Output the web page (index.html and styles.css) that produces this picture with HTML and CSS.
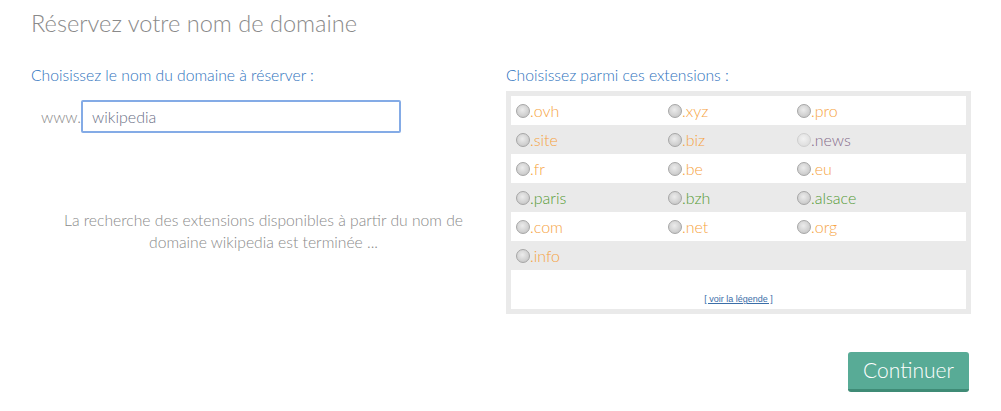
FILE: index.html
```html
<!DOCTYPE html>
<html lang="fr">
<head>
<meta charset="utf-8">
<title>Réservez votre nom de domaine</title>
<link rel="stylesheet" href="styles.css">
</head>
<body>
<div class="page">
  <h1 class="title">Réservez votre nom de domaine</h1>
  <div class="cols">
    <div class="left">
      <p class="label">Choisissez le nom du domaine à réserver :</p>
      <div class="domain-row">
        <span class="www">www.</span>
        <input class="domain-input" type="text" value="wikipedia">
      </div>
      <p class="status">La recherche des extensions disponibles à partir du nom de domaine wikipedia est terminée ...</p>
    </div>
    <div class="right">
      <p class="label">Choisissez parmi ces extensions :</p>
      <div class="panel">
        <div class="grid">
          <div class="row">
            <label class="ext orange"><span class="radio"></span>.ovh</label>
            <label class="ext orange"><span class="radio"></span>.xyz</label>
            <label class="ext orange"><span class="radio"></span>.pro</label>
          </div>
          <div class="row alt">
            <label class="ext orange"><span class="radio"></span>.site</label>
            <label class="ext orange"><span class="radio"></span>.biz</label>
            <label class="ext purple"><span class="radio disabled"></span>.news</label>
          </div>
          <div class="row">
            <label class="ext orange"><span class="radio"></span>.fr</label>
            <label class="ext orange"><span class="radio"></span>.be</label>
            <label class="ext orange"><span class="radio"></span>.eu</label>
          </div>
          <div class="row alt">
            <label class="ext green"><span class="radio"></span>.paris</label>
            <label class="ext green"><span class="radio"></span>.bzh</label>
            <label class="ext green"><span class="radio"></span>.alsace</label>
          </div>
          <div class="row">
            <label class="ext orange"><span class="radio"></span>.com</label>
            <label class="ext orange"><span class="radio"></span>.net</label>
            <label class="ext orange"><span class="radio"></span>.org</label>
          </div>
          <div class="row alt">
            <label class="ext orange"><span class="radio"></span>.info</label>
            <span></span>
            <span></span>
          </div>
        </div>
        <div class="legend"><a href="#">[ voir la légende ]</a></div>
      </div>
    </div>
  </div>
  <div class="actions">
    <button class="btn" type="button">Continuer</button>
  </div>
</div>
</body>
</html>
```

FILE: styles.css
```css
html, body {
  margin: 0;
  padding: 0;
  background: #ffffff;
}

body {
  font-family: Lato, "Open Sans", "Liberation Sans", sans-serif;
  font-weight: 300;
  color: #888888;
}

.page {
  padding: 8px 30px 0 31px;
}

.title {
  margin: 0;
  font-size: 23.6px;
  line-height: 30px;
  font-weight: 300;
  color: #8a8a8a;
}

.cols {
  display: flex;
  margin-top: 27px;
}

.left {
  width: 465px;
  flex: none;
}

.right {
  margin-left: 10px;
  width: 465px;
  flex: none;
}

.label {
  margin: 0;
  font-size: 15.7px;
  line-height: 20px;
  color: #2e72bd;
}

.domain-row {
  display: flex;
  align-items: center;
  margin-top: 15px;
}

.www {
  width: 50px;
  flex: none;
  text-align: right;
  font-size: 16px;
  color: #888888;
}

.domain-input {
  box-sizing: border-box;
  width: 320px;
  height: 33px;
  margin: 0;
  padding: 0 0 0 9px;
  border: 2px solid #84abe6;
  border-radius: 2px;
  font-family: Lato, "Open Sans", "Liberation Sans", sans-serif;
  font-weight: 300;
  font-size: 16px;
  color: #6a6f86;
  outline: none;
}

.status {
  margin: 76px 0 0 0;
  padding: 0 25px;
  font-size: 15.7px;
  line-height: 22px;
  text-align: center;
  color: #8a8a8a;
}

.panel {
  margin-top: 6px;
  border: 5px solid #eaeaea;
  background: #ffffff;
}

.row {
  display: grid;
  grid-template-columns: 152px 129px 1fr;
  height: 29px;
  background: #ffffff;
}

.row.alt {
  background: #eaeaea;
}

.ext {
  display: flex;
  align-items: center;
  padding-left: 5px;
  font-size: 16px;
  line-height: 29px;
}

.orange { color: #f6a342; }
.green { color: #569a36; }
.purple { color: #866c8a; }

.radio {
  box-sizing: border-box;
  width: 14px;
  height: 14px;
  flex: none;
  border-radius: 50%;
  border: 1px solid #a6a6a6;
  background: radial-gradient(circle at 45% 40%, #ececec 0%, #d3d3d3 55%, #bdbdbd 100%);
  margin-top: 1px;
}

.radio.disabled {
  border-color: #cfcfcf;
  background: radial-gradient(circle at 45% 40%, #f2f2f2 0%, #e2e2e2 60%, #d6d6d6 100%);
}

.legend {
  height: 39px;
  display: flex;
  align-items: flex-end;
  justify-content: center;
}

.legend a {
  font-family: "Liberation Sans", Arial, sans-serif;
  font-weight: 400;
  font-size: 9px;
  line-height: 12px;
  margin-bottom: 4px;
  color: #3b6ea8;
  text-decoration: underline;
}

.actions {
  display: flex;
  justify-content: flex-end;
  margin-top: 38px;
  padding-right: 2px;
}

.btn {
  box-sizing: border-box;
  width: 121px;
  height: 40px;
  margin: 0;
  padding: 0 0 2px 0;
  border: 0;
  border-bottom: 3px solid #3f8b76;
  border-radius: 3px;
  background: #58ab96;
  color: #ffffff;
  font-family: Lato, "Open Sans", "Liberation Sans", sans-serif;
  font-weight: 300;
  font-size: 21px;
  cursor: pointer;
}
```
